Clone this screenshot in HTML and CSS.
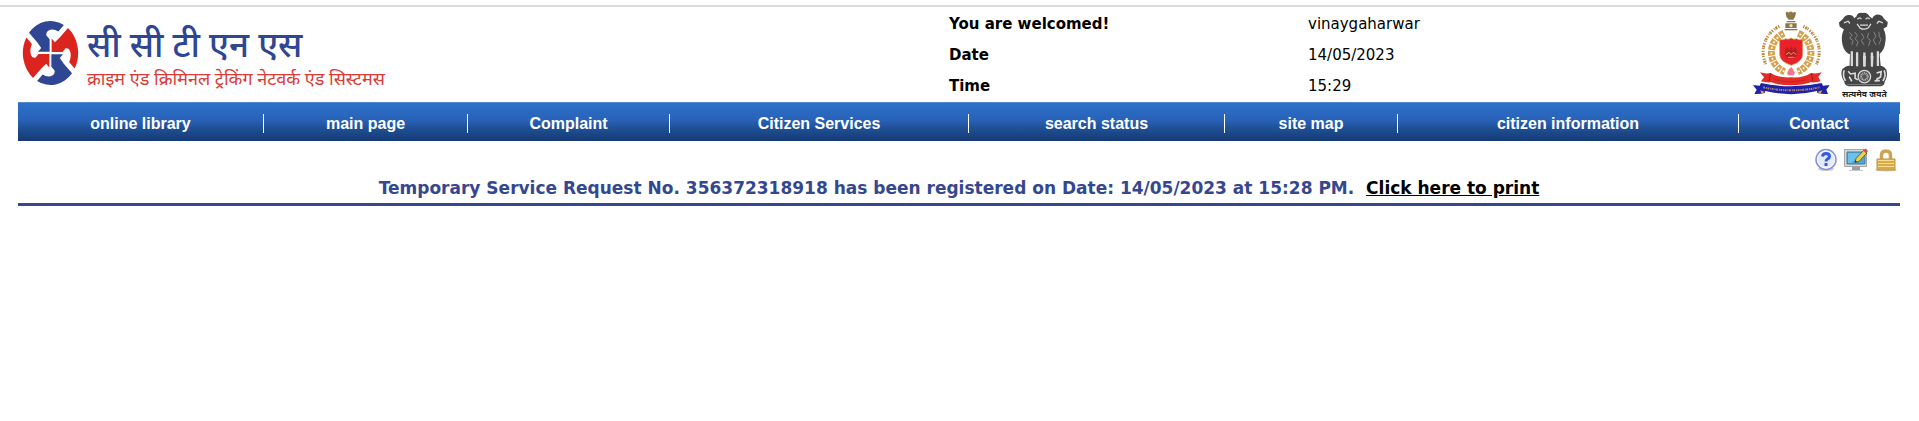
FILE: index.html
```html
<!DOCTYPE html>
<html lang="en">
<head>
<meta charset="utf-8">
<meta name="viewport" content="width=device-width, initial-scale=1">
<title>CCTNS Citizen Portal</title>
<link rel="stylesheet" href="styles.css">
</head>
<body>
<div class="top-rule"></div>
<div class="page">
  <header class="header">
    <div class="brand">
      <svg class="brand-mark" viewBox="-98 -98 196 196" preserveAspectRatio="none" aria-hidden="true">
        <defs>
          <path id="arrow" d="M-74-60A95 95 0 0 1 46-83L27-64Q8-74-8-66Q-16-61-14-52L-3-41V-4H-43L-32-15L-45-31Z"/>
        </defs>
        <g fill="#2f4692"><use href="#arrow"/><use href="#arrow" transform="rotate(180)"/></g>
        <g fill="#dc241f"><use href="#arrow" transform="rotate(90)"/><use href="#arrow" transform="rotate(270)"/></g>
      </svg>
      <div class="brand-text" lang="hi">
        <div class="brand-name">सी सी टी एन एस</div>
        <div class="brand-tagline">क्राइम एंड क्रिमिनल ट्रेकिंग नेटवर्क एंड सिस्टमस</div>
      </div>
    </div>
    <dl class="session">
      <dt>You are welcomed!</dt><dd>vinaygaharwar</dd>
      <dt>Date</dt><dd>14/05/2023</dd>
      <dt>Time</dt><dd>15:29</dd>
    </dl>
    <div class="emblems">
      <svg class="police" viewBox="0 0 252 282" role="img" aria-label="Police emblem">
        <g fill="#8b7748">
          <path d="M107 17q5-5 9 0q6-7 13 0q7-5 9 1l-3 11-5 9h-14l-7-9z"/>
          <path d="M110 42h26v4h-26zM106 49h34v14h-34z"/>
          <path d="M104 66h38v4h-38z"/>
        </g>
        <circle cx="123" cy="56" r="5" fill="#e9dfb8"/>
        <g fill="none" stroke="#d2a34c">
          <path d="M102 79A62 62 0 0 0 104 194" stroke-width="21" stroke-dasharray="14 3"/>
          <path d="M145 79A62 62 0 0 1 143 194" stroke-width="21" stroke-dasharray="14 3"/>
          <path d="M88 58A85 85 0 0 0 48 172M160 58A85 85 0 0 1 199 172" stroke="#b88c45" stroke-width="9" stroke-dasharray="4 3 6 2 3 5"/>
        </g>
        <g fill="none" stroke="#fff8e6" stroke-width="5" stroke-dasharray="6 11" stroke-dashoffset="-4">
          <path d="M102 79A62 62 0 0 0 104 194"/><path d="M145 79A62 62 0 0 1 143 194"/>
        </g>
        <path d="M89 98q12 2 18-3 9 4 16-2 8 6 17 2 6 5 18 3v44q0 22-34 33-35-11-35-33z" fill="#e8212a" stroke="#c9a04c" stroke-width="2"/>
        <path d="M105 145q-2-17 7-26 5 5 4 14l7-17 7 17q-1-9 5-14 8 9 6 26l-8 9h-20z" fill="#b61f22"/>
        <path d="M108 143l9-7 6 7 7-7 9 7M114 151h19" fill="none" stroke="#e49a63" stroke-width="3"/>
        <path d="M111 198l6-11 7-7 6 8 5 10-4 7h-16z" fill="#f27788"/>
        <path d="M30 196q15 5 32 2 20 15 61 13 39 2 60-13 18 3 32-2l-10 14 7 13q-12 4-30 3-23 9-60 9t-58-9q-18 1-31-3l9-12z" fill="#e52b25"/>
        <path d="M62 199l-5 24M184 199l5 24" stroke="#a5161a" stroke-width="3"/>
        <path d="M76 218q47 12 92 0" fill="none" stroke="#9d211f" stroke-width="3" stroke-dasharray="4 3"/>
        <path d="M9 235q10-1 20 1l4-8q91 20 182 0l4 8q10-2 20-1l-10 13 5 13q-17 1-32-3l-1-6q-77 19-155 0l-2 6q-14 4-31 3l7-13z" fill="#2021a5"/>
        <path d="M40 241q84 18 169 0" fill="none" stroke="#a98975" stroke-width="6" stroke-dasharray="5 3 3 2"/>
        <path d="M31 250l13 4-9 7zM217 250l-14 4 8 7z" fill="#e6a043"/>
      </svg>
      <svg class="lions" viewBox="0 0 192 288" role="img" aria-label="State Emblem of India">
        <g fill="#454545">
          <path d="M67 29q3-13 18-11 15-3 22 11l8 6q5-12 18-12 13 2 17 12l12 11-2 13-11 7q9 18 6 38-3 29-19 39l-22 7-25-2-26 2-20-8q-18-12-20-39-2-19 6-35l-13-9-2-12 12-11q6-12 18-12 12-1 16 10z"/>
          <path d="M48 127h17l2 57H46zM73 131h13l3 53H70zM96 131h13l4 53H94zM119 127h17l5 57h-24z"/>
          <path d="M23 190q15-16 30-10h76q18-6 29 11 5 17-5 35-2 14-12 14H43q-11-1-13-14-12-18-7-36z"/>
        </g>
        <g fill="none" stroke="#d9d9d9" stroke-width="4">
          <path d="M70 37q7-8 12 0M95 37q7-8 12 0M69 51l9 13q12 7 25-1l8-12M78 55h24M29 48l13-5 5 7M147 48l-12-5-6 7"/>
          <path d="M53 134v45M69 137v42M91 138v42M114 138v42M132 134v45" stroke-width="7"/>
          <path d="M30 192q-6 17 4 32M151 192q7 17-4 32M42 195l7 8 14-2v15l8 5M128 200l14-4-2 16-13 8M45 211l8 14M122 224l16-1" stroke-width="5"/>
          <circle cx="91" cy="211" r="19" fill="#555"/>
        </g>
        <circle cx="91" cy="211" r="10" fill="none" stroke="#bbb" stroke-width="6" stroke-dasharray="3 2"/>
        <path d="M45 77l9 8-7 10 10 7-4 12M62 76l8 11-8 9 10 9-5 14M82 80l8 12-8 10 8 13M104 78l-4 15 9 8-5 17M120 75l6 15-8 10 8 15M135 75l1 14 6 9-7 15" fill="none" stroke="#858585" stroke-width="3"/>
        <path d="M39 235h104" stroke="#777" stroke-width="3"/>
        <text class="motto" x="91" y="274" text-anchor="middle" lang="hi">सत्यमेव जयते</text>
      </svg>
    </div>
  </header>

  <nav class="nav" aria-label="Main">
    <a href="#">online library</a>
    <a href="#">main page</a>
    <a href="#">Complaint</a>
    <a href="#">Citizen Services</a>
    <a href="#">search status</a>
    <a href="#">site map</a>
    <a href="#">citizen information</a>
    <a href="#">Contact</a>
  </nav>

  <main>
    <div class="tools">
      <button type="button" aria-label="Help">
        <svg viewBox="0 0 24 24"><ellipse cx="12" cy="21" rx="8" ry="2" fill="#ccc"/><circle cx="12" cy="11.500" r="10" fill="#e3e9fa" stroke="#7f93e3" stroke-width="1.500"/><circle cx="12" cy="11.500" r="8.500" fill="none" stroke="#fff"/><path d="M8.500 8.500q.5-3 3.500-3 3.500 0 3.500 3 0 1.500-2 2.500-1.500 1-1.500 2.500" fill="none" stroke="#345ade" stroke-width="3"/><path d="M10.500 15h3v3h-3z" fill="#345ade"/></svg>
      </button>
      <button type="button" aria-label="Change settings">
        <svg viewBox="0 0 24 24"><path d="M8 17h8v5H8z" fill="#9b9fa1"/><path d="M5 22h14v1H5z" fill="#c7c7c7"/><path d="M.5 1.500h22v17H.500z" fill="#d6d8d9" stroke="#a4a7a9"/><path d="M3 4h18v12H3z" fill="#49a8df" stroke="#4f7890"/><path d="M4 5h14L7 15H4z" fill="#6bc0ec"/><path d="M11 14.500l1-4L20 2l3 3-8 8.500z" fill="#ead24a" stroke="#685e29"/><path d="M19.500 2.500L21.500.500l2.500 2.500-2 2.500z" fill="#dd4a4a"/><path d="M11 14.500l.5-2 1.500 1.500z" fill="#222"/></svg>
      </button>
      <button type="button" aria-label="Log out">
        <svg viewBox="0 0 24 24"><ellipse cx="12" cy="22" rx="11" ry="1.500" fill="#ccc"/><path d="M7.500 12V7.500q0-4.500 4.500-4.500t4.500 4.500V12" fill="none" stroke="#cba552" stroke-width="3.500"/><path d="M3 11h18v11H3z" fill="#e5b956" stroke="#bd923c"/><path d="M4 12.500h16M4 15.500h16M4 18.500h16" stroke="#f8dd91"/><path d="M4 14h16M4 17h16M4 20h16" stroke="#c99b43"/></svg>
      </button>
    </div>
    <p class="notice">Temporary Service Request No. 356372318918 has been registered on Date: 14/05/2023 at 15:28 PM.&nbsp; <a href="#">Click here to print</a></p>
  </main>
</div>
</body>
</html>
```
FILE: styles.css
```css
* { box-sizing: border-box; }
body {
  margin: 0;
  background: #fff;
  color: #000;
  font-family: Verdana, "DejaVu Sans", sans-serif;
}
.top-rule {
  height: 7px;
  border-bottom: 2px solid #dcdcdc;
}
.page { margin: 0 19px 0 18px; }

.header {
  display: grid;
  grid-template-columns: 931fr 800fr 151fr;
}
.brand {
  display: flex;
  align-items: flex-start;
  gap: 8px;
  padding: 13px 0 0 4px;
}
.brand-mark { width: 57px; height: 66px; }
.brand-text {
  padding-top: 2px;
  font-family: "Noto Sans", sans-serif;
  white-space: nowrap;
}
.brand-name {
  color: #2f4692;
  font-size: 35px;
  line-height: 44px;
  font-weight: 500;
}
.brand-tagline {
  color: #dc3a35;
  font-size: 18px;
  line-height: 24px;
}
.session {
  display: grid;
  grid-template-columns: 359fr 441fr;
  margin: 0;
  padding-top: 2px;
  font-size: 15px;
  line-height: 31px;
}
.session dt { font-weight: bold; }
.session dd { margin: 0; }
.emblems {
  display: flex;
  justify-content: flex-end;
  padding-right: 2px;
}
.emblems svg { flex: none; }
.police { width: 84px; height: 94px; }
.lions { width: 64px; height: 95px; }
.motto {
  font: bold 26px "Noto Sans", sans-serif;
  fill: #222;
}

.nav {
  display: grid;
  grid-template-columns: 246fr 204fr 202fr 299fr 256fr 173fr 341fr 161fr;
  padding: 11px 0 8px;
  border-top: 1px solid #5289d2;
  background: linear-gradient(#2d70ca, #2862b8 45%, #1f5197 65%, #163a74);
}
.nav a {
  border-right: 1px solid #fff;
  color: #fff;
  font: bold 16px/19px Arial, "Liberation Sans", sans-serif;
  text-align: center;
  text-decoration: none;
}

.tools {
  display: flex;
  justify-content: flex-end;
  gap: 6px;
  padding: 7px 2px 0 0;
}
.tools button {
  width: 24px;
  height: 24px;
  padding: 0;
  border: 0;
  background: none;
}
.tools svg { display: block; }
.notice {
  margin: 0;
  padding: 6px 0 5px;
  border-bottom: 3px solid #35478f;
  color: #35478f;
  font-size: 17px;
  line-height: 20px;
  font-weight: bold;
  text-align: center;
}
.notice a { color: #000; }
```
